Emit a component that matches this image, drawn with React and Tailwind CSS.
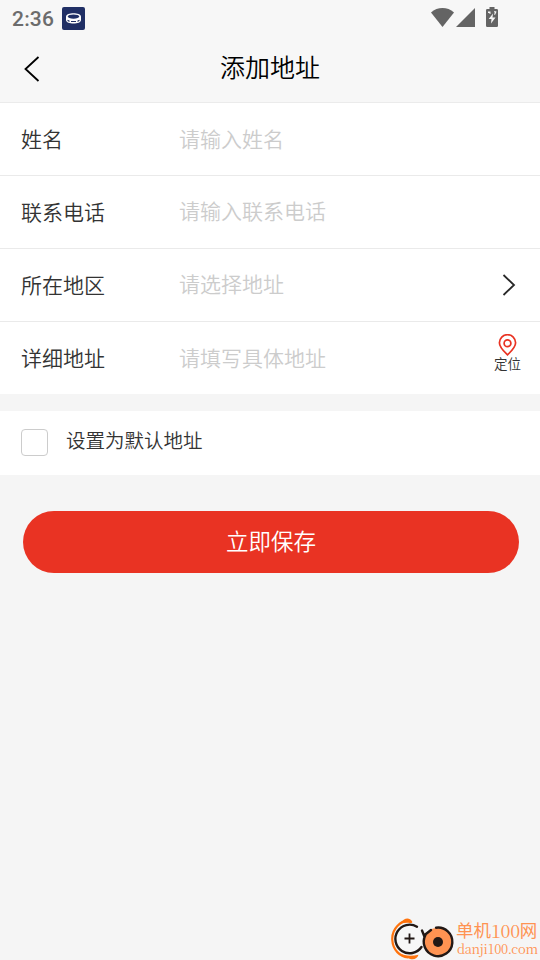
const rows = [
  { label: '姓名', hint: '请输入姓名', height: 'h-[73px] border-b', hintShift: 'pb-0.5' },
  { label: '联系电话', hint: '请输入联系电话', height: 'h-[73px] border-b', hintShift: 'pb-1' },
  { label: '所在地区', hint: '请选择地址', height: 'h-[73px] border-b', hintShift: 'pb-1', action: 'arrow' },
  { label: '详细地址', hint: '请填写具体地址', height: 'h-[72px]', hintShift: 'pb-0.5', action: 'locate' },
];

function StatusBar() {
  return (
    <div className="flex h-9 items-start pt-[7px] pl-3 text-[#6c6c6c]">
      <span className="w-[50px] font-['Roboto',sans-serif] text-[21px] leading-6 font-medium tracking-[0.2px]">2:36</span>
      <svg className="h-[23px] w-[23px]" viewBox="0 0 23 23">
        <rect width="23" height="23" rx="2" fill="#202f65" />
        <path d="M4 9.500C4 5 19 5 19 9.500V13c0 4.800-15 4.800-15 0Z" fill="#fff" />
        <ellipse cx="11.500" cy="9.600" rx="5.800" ry="2.100" fill="#202f65" />
        <path d="M5.500 12.700l2 .8v1.500l-2-.9ZM17.500 12.700l-2 .8v1.500l2-.9ZM9 13.900h5v1.200H9Z" fill="#202f65" />
      </svg>
      <svg className="ml-[346px] h-5 w-[68px]" viewBox="431 7 68 20" fill="#646464">
        <path d="M431 12.5C437.5 6.6 447.5 6.6 454 12.5L442.5 27Z" />
        <path d="M475 8V27H456Z" />
        <path d="M489.500 7h5v2h2.200q1.300 0 1.300 1.300v15.400q0 1.300-1.300 1.300h-9.400q-1.300 0-1.300-1.300V10.300q0-1.300 1.300-1.300h2.200Z" />
        <path d="M493 13.500L488.700 19H491.500L491 23.500L495.500 17.500H492.500ZM488 11.500h2.500v2.500h-1v-1H488ZM494 11.200h2.300v1l-1.200 2.500h-1l.7-2.400H494Z" fill="#f7f7f7" />
      </svg>
    </div>
  );
}

function Locate() {
  return (
    <div className="flex w-[27px] flex-col items-center">
      <svg className="h-[22px] w-[19px]" viewBox="0 0 19 22" fill="none" stroke="#e93323" strokeWidth="1.7">
        <path d="M9.500 20.800C7 18.500 1.400 13.700 1.400 8.800a8.100 8.100 0 0 1 16.200 0c0 4.900-5.600 9.700-8.100 12Z" />
        <circle cx="9.500" cy="9.200" r="3.400" />
      </svg>
      <span className="-mt-px text-[13.5px] leading-4 whitespace-nowrap text-[#333333]">定位</span>
    </div>
  );
}

function Watermark() {
  return (
    <div className="mt-auto flex h-[43px] justify-end pr-0.5 text-[#ff9352]">
      <svg className="h-[43px] w-[64px] shrink-0" viewBox="391 917 64 43" fill="none">
        <path d="M409 921C401 920 391.500 929 392.300 940C392.800 950 400 956.500 408 957.500" stroke="#ff730d" strokeWidth="2.200" />
        <path d="M401 923.500c2-5 8-7 11-2.300c.8 1.200-.2 2.200-2 1.800c-3-.7-6-.2-9 .5ZM399 952.500c5 3.500 12 4 19.500 2.300c-2 6.500-10 6-19.500-2.300Z" fill="#ff730d" />
        <circle cx="409.500" cy="938.700" r="13" fill="#f7f7f7" />
        <path d="M417 926.700A14.300 14.300 0 1 0 421.500 947" stroke="#221815" strokeWidth="2.400" strokeLinecap="round" />
        <circle cx="438" cy="942" r="14.300" fill="#ff9352" />
        <path d="M436 927.700A14.300 14.300 0 1 1 425.500 935M422 930.500L424 935.500L431 930" stroke="#221815" strokeWidth="2.400" strokeLinecap="round" />
        <circle cx="438" cy="942" r="5" fill="#221815" />
        <path d="M409.500 933.500v10M404.500 938.500h10" stroke="#221815" strokeWidth="1.800" />
      </svg>
      <div className="flex w-[83px] shrink-0 flex-col pt-0.5 font-normal whitespace-nowrap">
        <div className="flex pl-px text-[17.5px] leading-[22px]">
          <span>单机</span>
          <span className="font-['Noto_Serif_CJK_SC','Liberation_Serif',serif] text-[18px] tracking-[-0.3px]">100</span>
          <span>网</span>
        </div>
        <span className="pl-0.5 font-['Noto_Serif_CJK_SC','Liberation_Serif',serif] text-[13px] leading-[15px] tracking-[-0.35px]">danji100.com</span>
      </div>
    </div>
  );
}

export default function App() {
  return (
    <div className="flex h-[960px] w-[540px] flex-col overflow-hidden bg-[#f5f5f5] font-['Noto_Sans_CJK_SC',sans-serif] font-[350] text-[#333333]">
      <header className="h-[103px] border-b border-[#ebebeb] bg-[#f7f7f7]">
        <StatusBar />
        <div className="flex h-[66px] items-center pl-6">
          <svg className="h-[26px] w-4" viewBox="0 0 16 26" fill="none" stroke="#000" strokeWidth="1.800">
            <path d="M14.500 1L1.500 13L14.500 25" />
          </svg>
          <h1 className="ml-[180px] pb-1.5 text-[25px] leading-8 text-black">添加地址</h1>
        </div>
      </header>
      <section className="bg-white">
        {rows.map((row) => (
          <div key={row.label} className={`flex items-center border-[#eaeaea] pr-[19px] pl-[21px] ${row.height}`}>
            <span className="w-[158px] pb-0.5 text-[21px] leading-8">{row.label}</span>
            <span className={`flex-1 text-[21px] leading-8 text-[#cccccc] ${row.hintShift}`}>{row.hint}</span>
            {row.action === 'arrow' && (
              <svg className="mr-[5px] h-[22px] w-[14px]" viewBox="0 0 14 22" fill="none" stroke="#282828" strokeWidth="1.800">
                <path d="M1.500 1L12 11L1.500 21" />
              </svg>
            )}
            {row.action === 'locate' && <div className="pb-[11px]"><Locate /></div>}
          </div>
        ))}
      </section>
      <label className="mt-[17px] flex h-16 items-center bg-white pl-[21px]">
        <span className="mb-0.5 h-[27px] w-[27px] rounded-[4px] border border-[#cccccc]" />
        <span className="ml-[18px] pb-1.5 text-[19.5px] leading-7">设置为默认地址</span>
      </label>
      <button className="mt-9 ml-[23px] h-[62px] w-[496px] shrink-0 rounded-full bg-[#e93323] pb-0.5 text-[22.5px] text-white">立即保存</button>
      <Watermark />
    </div>
  );
}
